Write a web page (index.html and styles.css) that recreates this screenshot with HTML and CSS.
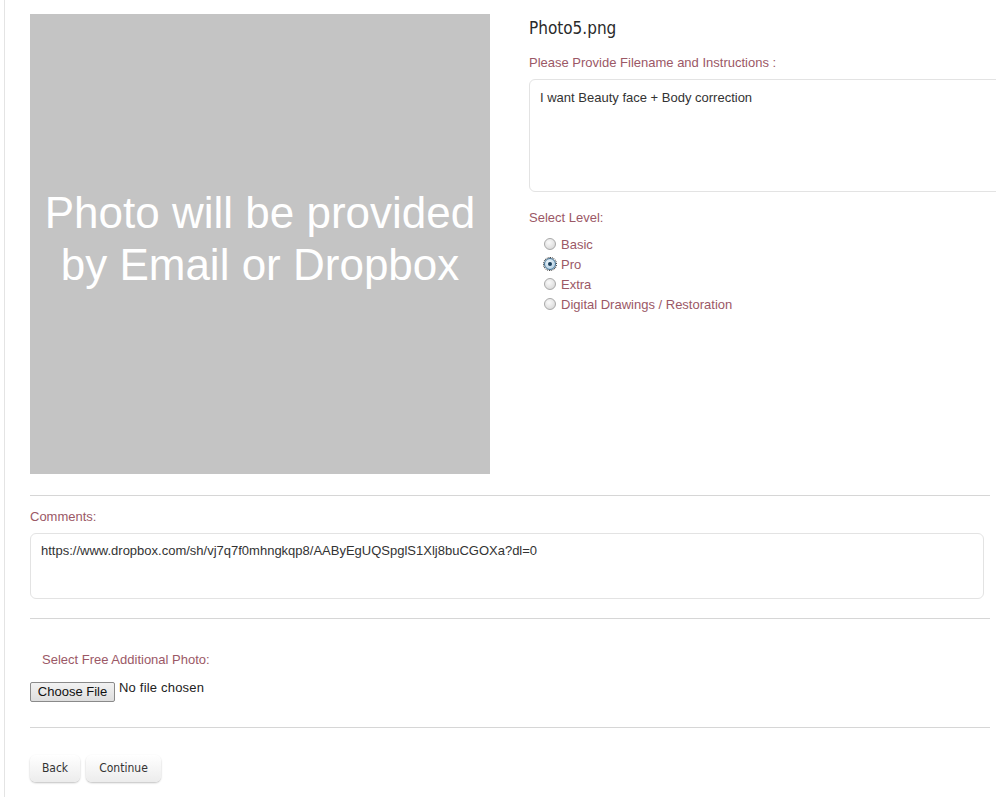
FILE: index.html
```html
<!DOCTYPE html>
<html>
<head>
<meta charset="utf-8">
<link rel="stylesheet" href="styles.css">
</head>
<body>
<div class="page">
  <div class="top">
    <div class="photo">
      <div class="photo-text">Photo will be provided<br>by Email or Dropbox</div>
    </div>
    <div class="side">
      <h2 class="title">Photo5.png</h2>
      <div class="label l-instr">Please Provide Filename and Instructions :</div>
      <div class="box box-instr">I want Beauty face + Body correction</div>
      <div class="label l-level">Select Level:</div>
      <ul class="radios">
        <li><span class="radio"></span><span class="rlabel">Basic</span></li>
        <li><span class="radio checked"></span><span class="rlabel">Pro</span></li>
        <li><span class="radio"></span><span class="rlabel">Extra</span></li>
        <li><span class="radio"></span><span class="rlabel">Digital Drawings / Restoration</span></li>
      </ul>
    </div>
  </div>
  <div class="rule r1"></div>
  <div class="label l-comments">Comments:</div>
  <div class="box box-comments">https://www.dropbox.com/sh/vj7q7f0mhngkqp8/AAByEgUQSpglS1Xlj8buCGOXa?dl=0</div>
  <div class="rule r2"></div>
  <div class="label l-extra">Select Free Additional Photo:</div>
  <div class="file-row">
    <span class="file-btn">Choose File</span>
    <span class="file-none">No file chosen</span>
  </div>
  <div class="rule r3"></div>
  <div class="actions">
    <span class="btn btn-back">Back</span>
    <span class="btn btn-cont">Continue</span>
  </div>
</div>
</body>
</html>
```
FILE: styles.css
```css
html, body {
  margin: 0;
  padding: 0;
  background: #fff;
}
body {
  font-family: "Liberation Sans", Arial, sans-serif;
  font-size: 13px;
  color: #333;
}
.page {
  margin-left: 4px;
  border-left: 1px solid #e4e4e4;
  padding-left: 25px;
  min-height: 797px;
  box-sizing: border-box;
  overflow: hidden;
}
.top {
  display: flex;
  padding-top: 14px;
}
.photo {
  width: 460px;
  height: 460px;
  background: #c4c4c4;
  flex: none;
  display: flex;
  align-items: center;
  justify-content: center;
}
.photo-text {
  color: #fff;
  font-family: "Liberation Sans", Arial, sans-serif;
  font-size: 44px;
  line-height: 52px;
  text-align: center;
  margin-top: -10px;
}
.side {
  margin-left: 39px;
  flex: 1;
  min-width: 0;
}
.title {
  margin: 4px 0 0 0;
  font-family: "DejaVu Sans Condensed", "Liberation Sans Narrow", sans-serif;
  font-stretch: condensed;
  font-weight: normal;
  font-size: 17px;
  line-height: 20px;
  color: #2a2a2a;
}
.label {
  color: #9b5866;
  font-size: 13px;
  line-height: 14px;
}
.l-instr {
  margin-top: 18px;
}
.box {
  border: 1px solid #e3e3e3;
  border-radius: 6px;
  box-sizing: border-box;
  color: #333;
  font-size: 13px;
  line-height: 14px;
  background: #fff;
}
.box-instr {
  margin-top: 9px;
  width: 480px;
  height: 113px;
  padding: 11px 10px;
}
.l-level {
  margin-top: 19px;
}
.radios {
  list-style: none;
  margin: 9px 0 0 0;
  padding: 0 0 0 15px;
}
.radios li {
  display: flex;
  align-items: center;
  height: 20px;
}
.radio {
  width: 12px;
  height: 12px;
  border-radius: 50%;
  border: 1px solid #a9a9a9;
  background: radial-gradient(circle at 40% 35%, #fafafa 0%, #e2e2e2 60%, #cfcfcf 100%);
  box-sizing: border-box;
  flex: none;
  position: relative;
}
.radio.checked {
  border-color: #3d6c8f;
  background: radial-gradient(circle at 40% 35%, #eef6fb 0%, #b9d4e6 70%, #8fb3cc 100%);
  outline: 1px dotted #222;
  outline-offset: 0px;
}
.radio.checked::after {
  content: "";
  position: absolute;
  left: 3px;
  top: 3px;
  width: 4px;
  height: 4px;
  border-radius: 50%;
  background: #1a3f5c;
}
.rlabel {
  margin-left: 5px;
  color: #9b5866;
  font-size: 13px;
}
.rule {
  height: 1px;
  background: #d6d6d6;
  width: 960px;
}
.r1 {
  margin-top: 21px;
}
.l-comments {
  margin-top: 14px;
}
.box-comments {
  margin-top: 9px;
  width: 954px;
  height: 66px;
  padding: 10px 10px;
}
.r2 {
  margin-top: 19px;
}
.l-extra {
  margin-top: 34px;
  padding-left: 12px;
}
.file-row {
  display: flex;
  align-items: flex-start;
  margin-top: 15px;
  height: 20px;
}
.file-btn {
  display: inline-block;
  box-sizing: border-box;
  height: 20px;
  width: 85px;
  border: 1px solid #8a8a8a;
  border-radius: 2px;
  background: linear-gradient(#f2f2f2, #dedede);
  font-size: 13px;
  line-height: 18px;
  text-align: center;
  color: #111;
}
.file-none {
  margin-left: 4px;
  font-size: 13px;
  line-height: 12px;
  color: #222;
  letter-spacing: 0.2px;
}
.r3 {
  margin-top: 25px;
}
.actions {
  display: flex;
  gap: 6px;
  margin-top: 27px;
}
.btn {
  display: inline-block;
  height: 27px;
  box-sizing: border-box;
  border-radius: 6px;
  background: linear-gradient(#ffffff, #ececec);
  box-shadow: 0 1px 2px rgba(0,0,0,0.25);
  font-family: "DejaVu Sans Condensed", "Liberation Sans Narrow", sans-serif;
  font-stretch: condensed;
  font-size: 12px;
  line-height: 27px;
  color: #333;
  text-align: center;
  padding: 0;
}
.btn-back {
  width: 50px;
}
.btn-cont {
  width: 75px;
}
```
